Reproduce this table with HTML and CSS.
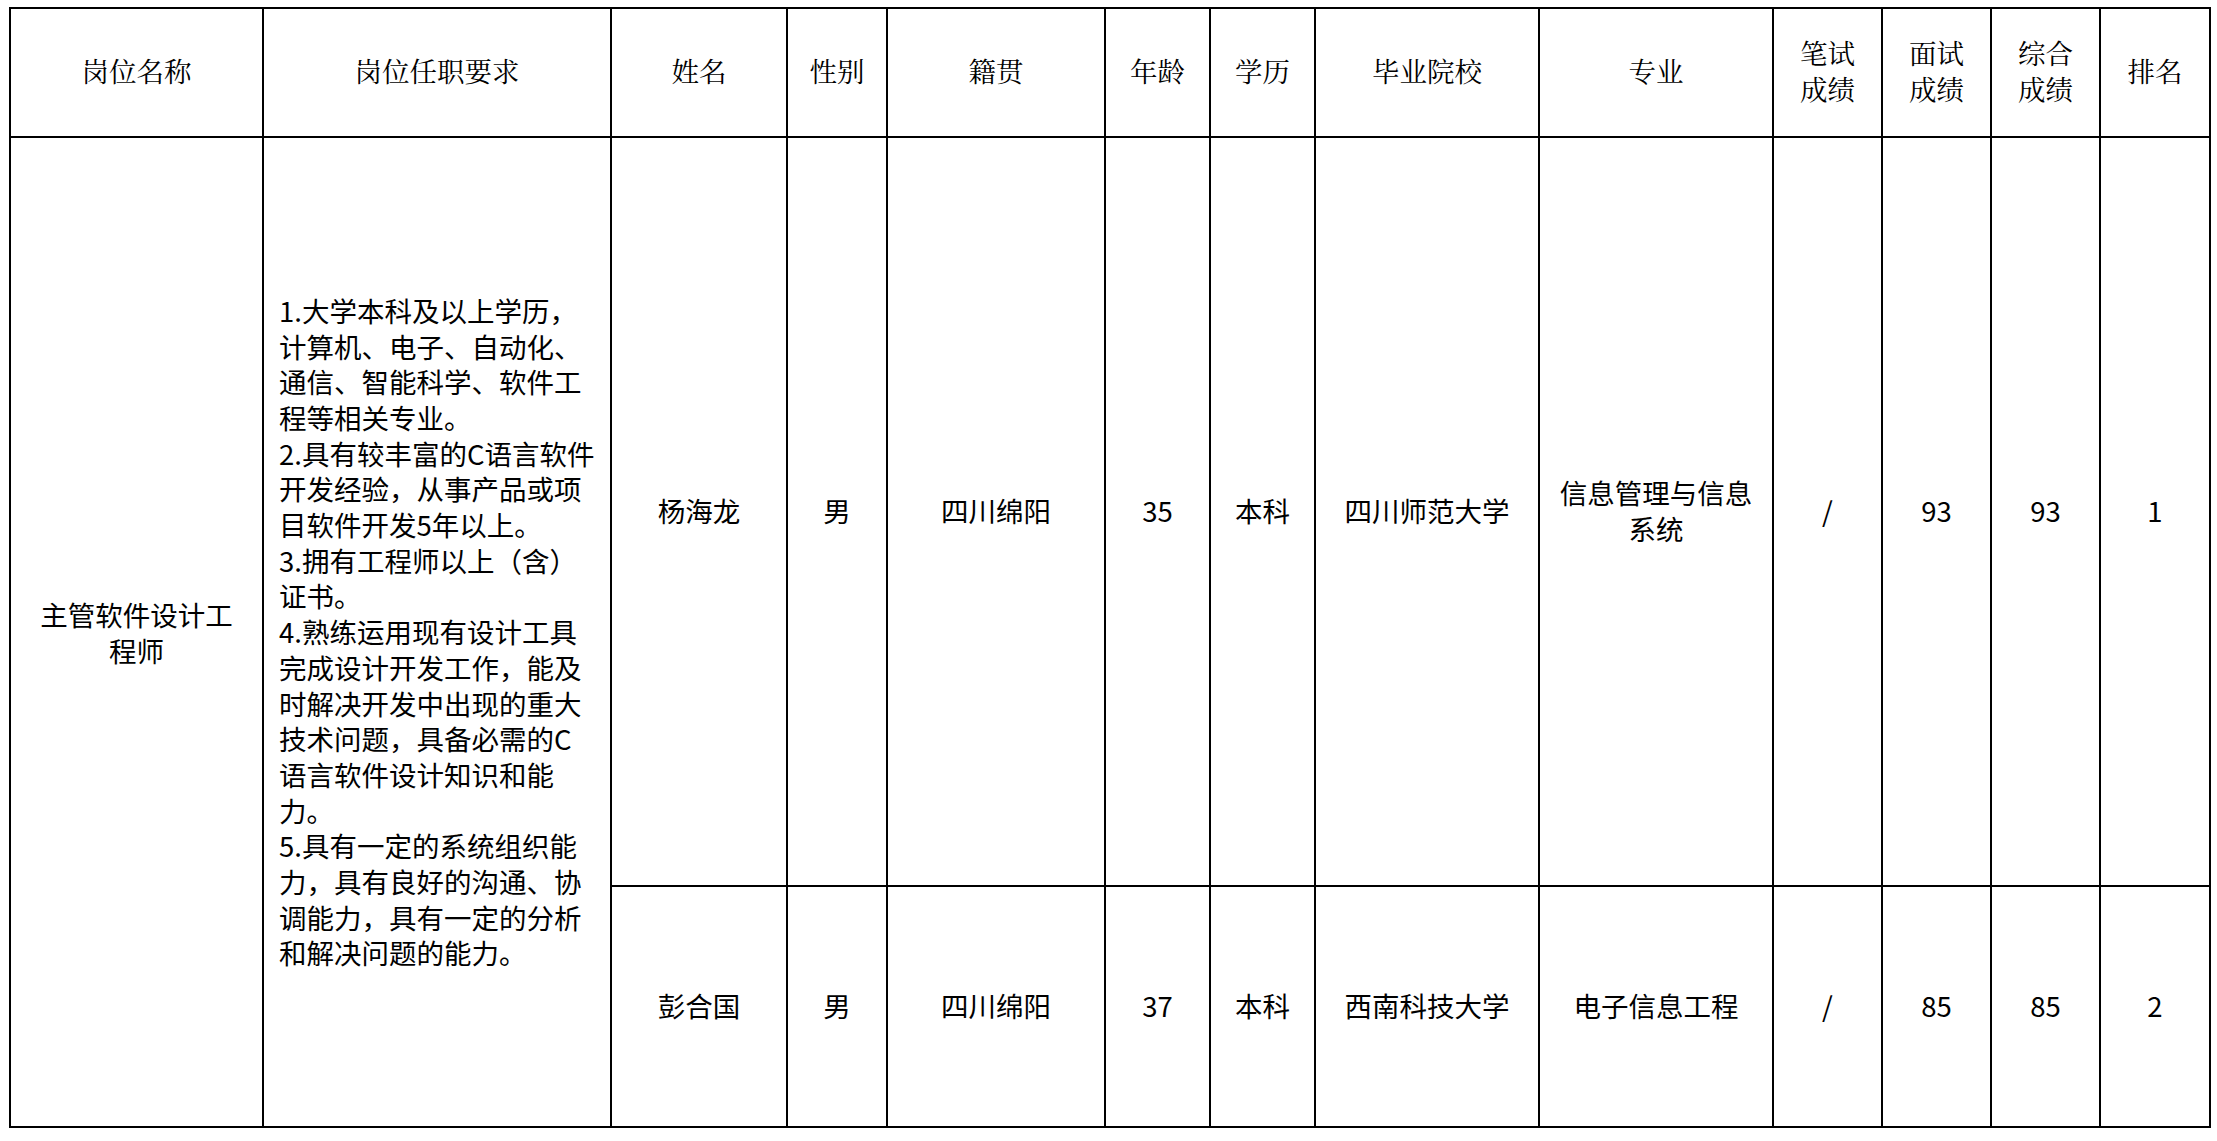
FILE: index.html
```html
<!DOCTYPE html>
<html lang="zh-CN">
<head>
<meta charset="utf-8">
<title>岗位招聘成绩表</title>
<link rel="stylesheet" href="styles.css">
</head>
<body>
<div class="sheet">
<table class="grid">
  <colgroup>
    <col class="w-post">
    <col class="w-req">
    <col class="w-name">
    <col class="w-sex">
    <col class="w-origin">
    <col class="w-age">
    <col class="w-edu">
    <col class="w-school">
    <col class="w-major">
    <col class="w-score">
    <col class="w-score">
    <col class="w-score">
    <col class="w-rank">
  </colgroup>
  <thead>
    <tr class="row-head">
      <th>岗位名称</th>
      <th>岗位任职要求</th>
      <th>姓名</th>
      <th>性别</th>
      <th>籍贯</th>
      <th>年龄</th>
      <th>学历</th>
      <th>毕业院校</th>
      <th>专业</th>
      <th>笔试<br>成绩</th>
      <th>面试<br>成绩</th>
      <th>综合<br>成绩</th>
      <th>排名</th>
    </tr>
  </thead>
  <tbody>
    <tr class="row-one">
      <td rowspan="2" class="post">主管软件设计工<br>程师</td>
      <td rowspan="2" class="req">1.大学本科及以上学历，<br>计算机、电子、自动化、<br>通信、智能科学、软件工<br>程等相关专业。<br>2.具有较丰富的C语言软件<br>开发经验，从事产品或项<br>目软件开发5年以上。<br>3.拥有工程师以上（含）<br>证书。<br>4.熟练运用现有设计工具<br>完成设计开发工作，能及<br>时解决开发中出现的重大<br>技术问题，具备必需的C<br>语言软件设计知识和能<br>力。<br>5.具有一定的系统组织能<br>力，具有良好的沟通、协<br>调能力，具有一定的分析<br>和解决问题的能力。</td>
      <td>杨海龙</td>
      <td>男</td>
      <td>四川绵阳</td>
      <td>35</td>
      <td>本科</td>
      <td>四川师范大学</td>
      <td>信息管理与信息<br>系统</td>
      <td>/</td>
      <td>93</td>
      <td>93</td>
      <td>1</td>
    </tr>
    <tr class="row-two">
      <td>彭合国</td>
      <td>男</td>
      <td>四川绵阳</td>
      <td>37</td>
      <td>本科</td>
      <td>西南科技大学</td>
      <td>电子信息工程</td>
      <td>/</td>
      <td>85</td>
      <td>85</td>
      <td>2</td>
    </tr>
  </tbody>
</table>
</div>
</body>
</html>
```
FILE: styles.css
```css
html, body {
  margin: 0;
  padding: 0;
  background: #ffffff;
}

.sheet {
  padding: 7px 0 0 9px;
}

.grid {
  border-collapse: collapse;
  table-layout: fixed;
  width: 2200px;
}

.w-post { width: 253px; }
.w-req { width: 348px; }
.w-name { width: 176px; }
.w-sex { width: 100px; }
.w-origin { width: 218px; }
.w-age { width: 105px; }
.w-edu { width: 105px; }
.w-school { width: 224px; }
.w-major { width: 234px; }
.w-score { width: 109px; }
.w-rank { width: 110px; }

.grid th,
.grid td {
  border: 2px solid #000000;
  padding: 0 6px 4px;
  text-align: center;
  vertical-align: middle;
  color: #000000;
  font-family: "Noto Sans CJK SC", sans-serif;
  font-size: 27.5px;
  line-height: 36px;
  font-weight: 400;
  white-space: nowrap;
}

.grid th {
  font-family: "Noto Serif CJK SC", "Noto Sans CJK SC", serif;
  padding-bottom: 6px;
}

.row-head { height: 129px; }
.row-one { height: 749px; }
.row-two { height: 241px; }

.grid td.post {
  padding-bottom: 0;
}

.grid td.req {
  text-align: left;
  padding: 0 6px 0 15px;
  line-height: 35.7px;
}
```
